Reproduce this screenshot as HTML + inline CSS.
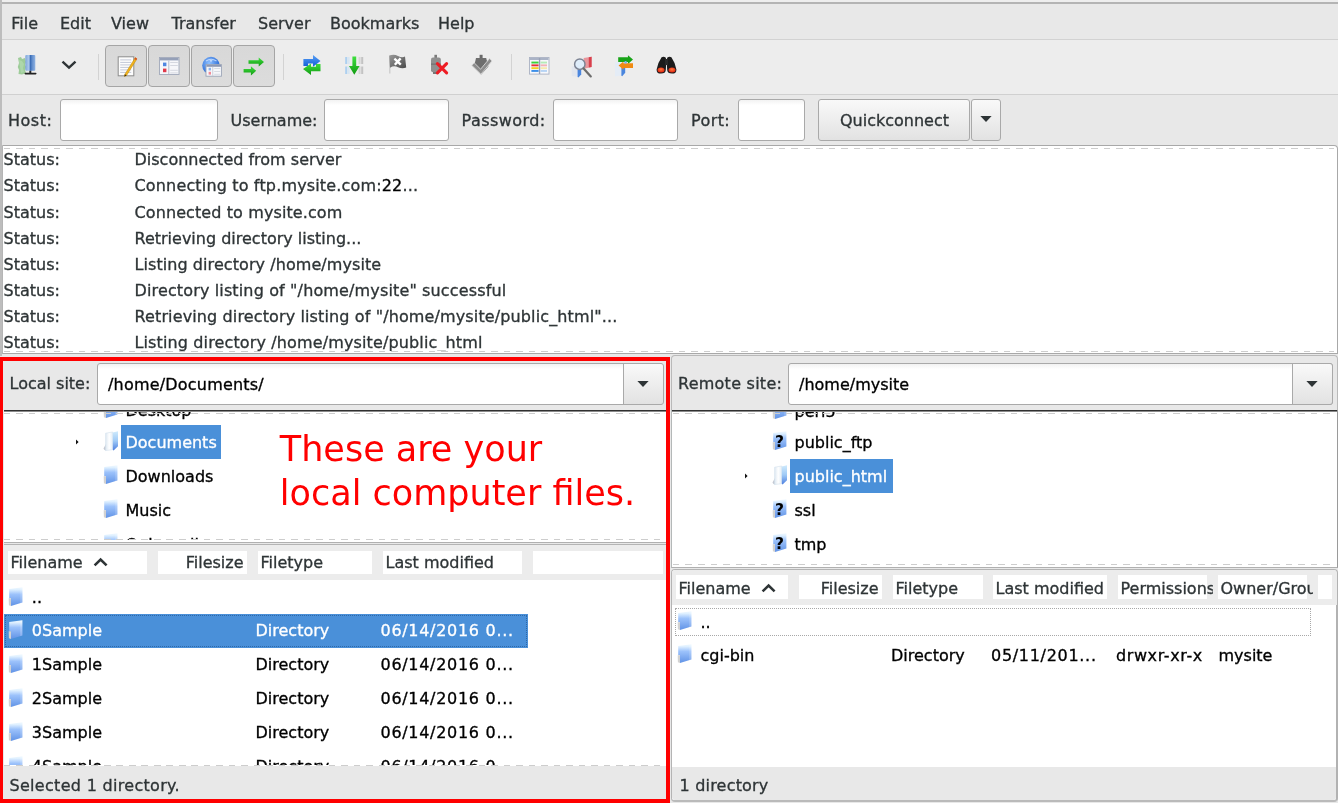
<!DOCTYPE html>
<html><head><meta charset="utf-8"><title>FileZilla</title><style>
html,body{margin:0;padding:0;}
body{width:1338px;height:803px;overflow:hidden;background:#e8e8e8;position:relative;will-change:transform;font-family:"DejaVu Sans", "Liberation Sans", sans-serif;font-size:16px;line-height:20px;color:#2e3436;}
div,span.t,svg{position:absolute;box-sizing:border-box;}
span.t{white-space:pre;-webkit-text-stroke:0.32px currentColor;}
.entry{background:linear-gradient(#f2f2f2,#fff 5px);border:1px solid #a9a9a9;border-radius:3px;}
.btn{background:linear-gradient(#f9f9f9,#e2e2e2);border:1px solid #a9a9a9;border-radius:3px;}
.tog{background:linear-gradient(#d8d8d8,#dcdcdc);border:1px solid #a5a5a5;border-radius:4px;}
.hc{background:#fff;}
.dash{height:1px !important;background:repeating-linear-gradient(90deg,#cdcdcd 0,#cdcdcd 6.5px,transparent 6.5px,transparent 12.5px);}
.sel{background:#4a90d9;}
.clip{overflow:hidden;}
.r{-webkit-text-stroke:0 !important;}</style></head><body>
<svg width="0" height="0" style="left:0;top:0"><defs>
<linearGradient id="gF" x1="0" y1="0" x2="0" y2="1"><stop offset="0" stop-color="#f0f9ff"/><stop offset=".12" stop-color="#dff0ff"/><stop offset=".38" stop-color="#9cc2fb"/><stop offset="1" stop-color="#6193e6"/></linearGradient>
<linearGradient id="gO" x1="0" y1="0" x2="0" y2="1"><stop offset="0" stop-color="#cfeafc"/><stop offset=".5" stop-color="#9fcaf6"/><stop offset="1" stop-color="#4f80e0"/></linearGradient>
<linearGradient id="gP" x1="0" y1="0" x2="1" y2="0"><stop offset="0" stop-color="#dde8f2"/><stop offset=".5" stop-color="#ffffff"/><stop offset="1" stop-color="#e3edf6"/></linearGradient>
<linearGradient id="gSrv" x1="0" y1="0" x2="1" y2="0"><stop offset="0" stop-color="#7fa6da"/><stop offset=".45" stop-color="#b9d2f2"/><stop offset=".55" stop-color="#4f7fc4"/><stop offset="1" stop-color="#8fb2e2"/></linearGradient>
<linearGradient id="gGr" x1="0" y1="0" x2="0" y2="1"><stop offset="0" stop-color="#3fe03f"/><stop offset="1" stop-color="#129a12"/></linearGradient>
<linearGradient id="gBl" x1="0" y1="0" x2="0" y2="1"><stop offset="0" stop-color="#5aa0f5"/><stop offset="1" stop-color="#0f5fd8"/></linearGradient>
<radialGradient id="gGl" cx=".4" cy=".35" r=".7"><stop offset="0" stop-color="#8ec0ff"/><stop offset="1" stop-color="#1c5fd0"/></radialGradient>
<linearGradient id="gGy" x1="0" y1="0" x2="1" y2="1"><stop offset="0" stop-color="#9a9a9a"/><stop offset="1" stop-color="#4a4a4a"/></linearGradient>
<radialGradient id="gLens" cx=".5" cy=".4" r=".6"><stop offset="0" stop-color="#ff7a3a"/><stop offset="1" stop-color="#e02010"/></radialGradient>
</defs></svg>
<div style="left:0px;top:0px;width:1338px;height:2px;background:#eeeeee;"></div>
<div style="left:0px;top:2px;width:1338px;height:2px;background:#b4b4b4;"></div>
<div style="left:0px;top:0px;width:2px;height:356px;background:#bdbdbd;"></div>
<div style="left:2px;top:39px;width:1336px;height:1px;background:#d2d2d2;"></div>
<span class="t" style="left:11.3px;top:13.76px;">File</span>
<span class="t" style="left:60px;top:13.76px;">Edit</span>
<span class="t" style="left:111px;top:13.76px;">View</span>
<span class="t" style="left:171.5px;top:13.76px;">Transfer</span>
<span class="t" style="left:258px;top:13.76px;">Server</span>
<span class="t" style="left:330px;top:13.76px;">Bookmarks</span>
<span class="t" style="left:438px;top:13.76px;">Help</span>
<div style="left:2px;top:40px;width:1336px;height:54px;background:#ededed;"></div>
<div style="left:2px;top:94px;width:1336px;height:1px;background:#d0d0d0;"></div>
<div class="tog" style="left:105.3px;top:45px;width:41.6px;height:42px;"></div>
<div class="tog" style="left:148.0px;top:45px;width:41.6px;height:42px;"></div>
<div class="tog" style="left:190.7px;top:45px;width:41.6px;height:42px;"></div>
<div class="tog" style="left:233.40000000000003px;top:45px;width:41.6px;height:42px;"></div>
<div style="left:97.6px;top:54px;width:1px;height:26px;background:#d3d3d3;"></div>
<div style="left:283px;top:54px;width:1px;height:26px;background:#d3d3d3;"></div>
<div style="left:510.6px;top:54px;width:1px;height:26px;background:#d3d3d3;"></div>
<svg style="left:16.5px;top:54px;" width="22" height="22" viewBox="0 0 22 22"><path d="M1 4 L4 3 L5 5 L8 4 L9 8 L8 11 L9.5 13 L8 16 L9 19 L5 20.5 L1.5 20 L2 16 L0.8 13 L2 9z" fill="#8fc58a" opacity=".85"/><path d="M2 6l3 1 2 3-1 4 1 4-3 1z" fill="#b4dcb0" opacity=".7"/><rect x="8.3" y="1" width="10" height="15.8" rx="1" fill="url(#gSrv)"/><rect x="12.6" y="1" width="1.6" height="15.8" fill="#3d6fb8"/><rect x="12.3" y="16.8" width="2" height="2.4" fill="#2a2a2a"/><rect x="7.5" y="18.8" width="12" height="1.6" rx=".8" fill="#222"/></svg>
<svg style="left:61.3px;top:60px;" width="16" height="10" viewBox="0 0 16 10"><path d="M1.5 1.6 L8 7.6 L14.5 1.6" fill="none" stroke="#2e3436" stroke-width="2.4"/></svg>
<svg style="left:115.5px;top:54.5px;" width="23" height="23" viewBox="0 0 23 23"><rect x="2.2" y="1.8" width="15.6" height="19" fill="#fdfdfd" stroke="#8d8d8d" stroke-width="1"/><rect x="4.2" y="4.4" width="11" height="1" fill="#c3c8d8"/><rect x="4.2" y="6.9" width="11" height="1" fill="#c3c8d8"/><rect x="4.2" y="9.4" width="11" height="1" fill="#c3c8d8"/><rect x="4.2" y="11.9" width="11" height="1" fill="#c3c8d8"/><rect x="4.2" y="14.4" width="11" height="1" fill="#c3c8d8"/><rect x="4.2" y="16.9" width="11" height="1" fill="#c3c8d8"/><path d="M19.3 2.6 L21 3.8 L10.6 20.4 L8.4 21.4 L8.9 19.2z" fill="#f2b31c" stroke="#b8860b" stroke-width=".5"/><path d="M19.3 2.6L21 3.8 20.2 5.2 18.5 4z" fill="#d9482b"/><path d="M8.4 21.4l.5-2.2 1.7 1.2z" fill="#3a2a10"/></svg>
<svg style="left:158.8px;top:57px;" width="21" height="19" viewBox="0 0 21 19"><rect x=".5" y=".5" width="19.5" height="17" fill="#f6f7fa" stroke="#a0a8ba" stroke-width=".9"/><rect x="1" y="1" width="18.5" height="2.4" fill="#95a0b8"/><rect x="9.3" y="3.6" width="1" height="13.5" fill="#b6bccb"/><rect x="4" y="5.6" width="3.4" height="3.6" fill="#4f86e0"/><rect x="4" y="11.6" width="3.4" height="3.6" fill="#e0394a"/><rect x="11.2" y="5" width="7.6" height="1" fill="#d5d8e0"/><rect x="11.2" y="8" width="7.6" height="1" fill="#d5d8e0"/><rect x="11.2" y="12.8" width="7.6" height="1" fill="#d5d8e0"/><rect x="11.2" y="15.4" width="7.6" height="1" fill="#d5d8e0"/></svg>
<svg style="left:202.3px;top:55.5px;" width="21" height="21" viewBox="0 0 21 21"><circle cx="9" cy="9.6" r="8.8" fill="url(#gGl)"/><path d="M4 5 Q9 1.5 14.5 5" fill="none" stroke="#cfe4ff" stroke-width="1.2" opacity=".8"/><path d="M7.4 4h3.2l-1.6 2.6z" fill="#cfe4ff" opacity=".8"/><rect x="4" y="8.6" width="15.4" height="11.6" fill="#f6f7fa" stroke="#9aa3b6" stroke-width=".9"/><rect x="4.4" y="9" width="14.6" height="1.8" fill="#8d98b3"/><rect x="10.4" y="10.8" width=".8" height="9" fill="#c0c5d2"/><rect x="6.6" y="11.8" width="2.4" height="2.6" fill="#8db3ee"/><rect x="6.6" y="15.8" width="2.4" height="2.8" fill="#f08a96"/><rect x="12.2" y="12" width="6" height=".9" fill="#d5d8e0"/><rect x="12.2" y="15" width="6" height=".9" fill="#d5d8e0"/><rect x="12.2" y="17.8" width="6" height=".9" fill="#d5d8e0"/></svg>
<svg style="left:243.2px;top:56px;" width="22" height="20" viewBox="0 0 22 20"><path d="M5.5 4.3 L15.71 4.3 L15.71 1.4000000000000004 L21.0 6 L15.71 10.6 L15.71 7.7 L5.5 7.7z" fill="url(#gGr)"/><path d="M0.6 13.100000000000001 L7.91 13.100000000000001 L7.91 10.200000000000001 L13.2 14.8 L7.91 19.4 L7.91 16.5 L0.6 16.5z" fill="url(#gGr)"/></svg>
<svg style="left:302px;top:54px;" width="20" height="22" viewBox="0 0 20 22"><path d="M1.4 12 V5 H11 V1 L18.5 7 L11 12.8 V9.5 H6 V12z" fill="url(#gBl)"/><path d="M18.5 10 V17.2 H9 V21 L1 15 L9 9.4 V12.7 H14 V10z" fill="url(#gGr)"/></svg>
<svg style="left:343.4px;top:56px;" width="22" height="20" viewBox="0 0 22 20"><rect x="2.2" y="1" width="2" height="7" fill="#9cc8f0" opacity=".8"/><rect x="2.2" y="10.5" width="2" height="7.5" fill="#9cc8f0" opacity=".8"/><rect x="4.6" y="1" width="2" height="7" fill="#cfe3f5" opacity=".8"/><rect x="4.6" y="10.5" width="2" height="7.5" fill="#cfe3f5" opacity=".8"/><rect x="15.6" y="1" width="2" height="7" fill="#d0d0d0" opacity=".8"/><rect x="15.6" y="10.5" width="2" height="7.5" fill="#d0d0d0" opacity=".8"/><rect x="18.2" y="1" width="2" height="7" fill="#b8b8b8" opacity=".8"/><rect x="18.2" y="10.5" width="2" height="7.5" fill="#b8b8b8" opacity=".8"/><path d="M9.4 0.6 H13.2 V10 H16.6 L11.3 18.8 L6 10 H9.4z" fill="url(#gGr)"/></svg>
<svg style="left:388px;top:54px;" width="20" height="22" viewBox="0 0 20 22"><rect x="1.2" y="2" width="1.2" height="17.5" fill="#c9c9c9"/><path d="M1.2 1.6 Q6 -0.4 10 2 T17 2.6 L18.2 13.6 Q14 15.2 10 13.2 T2 13.8z" fill="url(#gGy)"/><path d="M6.4 4.6 L12.8 10.6 M12.6 4.4 L6.8 10.8" stroke="#fff" stroke-width="2.4" fill="none"/></svg>
<svg style="left:430px;top:54.2px;" width="20" height="22" viewBox="0 0 20 22"><rect x="4.4" y="0.8" width="2.6" height="3.5" fill="#7a7a7a"/><rect x="1" y="3.6" width="9.8" height="14.6" rx="2" fill="#8f8f8f"/><rect x="1" y="9.6" width="9.8" height="1" fill="#6c6c6c"/><rect x="3" y="18" width="5.6" height="2" fill="#777"/><path d="M7.4 9.6 L16.6 18.8 M16.6 9.6 L7.4 18.8" stroke="#ee1c24" stroke-width="3.1" stroke-linecap="round" fill="none"/></svg>
<svg style="left:471px;top:54px;" width="22" height="22" viewBox="0 0 22 22"><rect x="8.6" y="0.8" width="3" height="3.6" fill="#6a6a6a"/><path d="M5 4 L15.2 4 L17.4 12.6 L10.2 20.6 L3 12.8z" fill="#6e6e6e"/><path d="M0.8 11.4 L3.2 8.8 L9.6 15.2 L18.6 4.4 L21 7 L9.9 20.2z" fill="#8c8c8c" stroke="#d8d8d8" stroke-width=".9"/></svg>
<svg style="left:528.8px;top:57px;" width="21" height="18" viewBox="0 0 21 18"><rect x=".5" y=".5" width="19.5" height="16.6" fill="#f7f8fb" stroke="#a9b1c3" stroke-width=".9"/><rect x="1" y="1" width="18.5" height="2" fill="#aab3c6"/><rect x="2.4" y="4.6" width="7.2" height="1.9" fill="#39d339"/><rect x="11.6" y="4.6" width="6.4" height="1.9" fill="#39d339" opacity=".35"/><rect x="2.4" y="7.3999999999999995" width="7.2" height="1.9" fill="#e8323c"/><rect x="11.6" y="7.3999999999999995" width="6.4" height="1.9" fill="#e8323c" opacity=".35"/><rect x="2.4" y="10.2" width="7.2" height="1.9" fill="#f2d21f"/><rect x="11.6" y="10.2" width="6.4" height="1.9" fill="#f2d21f" opacity=".35"/><rect x="2.4" y="12.999999999999998" width="7.2" height="1.9" fill="#3d8fe8"/><rect x="11.6" y="12.999999999999998" width="6.4" height="1.9" fill="#3d8fe8" opacity=".35"/><rect x="9.9" y="1" width="1.3" height="16" fill="#97a1b6"/></svg>
<svg style="left:571px;top:55.8px;" width="22" height="23" viewBox="0 0 22 23"><path d="M12.6 2 L20.6 0.8 L20.6 11 L14 12.6z" fill="#e8969c"/><path d="M17.8 1.2L20.6 .8V11l-2.8 .6z" fill="#d8404c"/><path d="M0.8 10.6 L8 9.6 L8 21 L0.8 20z" fill="#e2e6ee"/><path d="M6.6 14 L10.2 13.4 L10.2 18.6 L7.4 21.6 L6.6 21z" fill="#4a86de"/><circle cx="8.8" cy="8.2" r="5.2" fill="#dcecfb" fill-opacity=".85" stroke="#7d8494" stroke-width="1.5"/><path d="M12.6 12.4 L19.8 20.4" stroke="#6d6d6d" stroke-width="2.2" stroke-linecap="round"/></svg>
<svg style="left:614px;top:55px;" width="20" height="22" viewBox="0 0 20 22"><path d="M1 7.6 L7.4 6.6 L7.4 20.6 L1 21.4z" fill="#e4ecf6"/><path d="M7.4 12.6 L11.2 11.8 L11.2 17.8 L8.2 21.2 L7.4 20.8z" fill="#4a86de"/><path d="M4.2 2.3 L13.940000000000001 2.3 L13.940000000000001 0.1999999999999993 L19.0 4.6 L13.940000000000001 9.0 L13.940000000000001 6.8999999999999995 L4.2 6.8999999999999995z" fill="#18a418"/><path d="M19.0 8.3 L9.43 8.3 L9.43 6.3999999999999995 L4.6 10.6 L9.43 14.8 L9.43 12.899999999999999 L19.0 12.899999999999999z" fill="#f08a12"/><circle cx="11.6" cy="7.4" r="1.3" fill="#7fb2ee"/></svg>
<svg style="left:656px;top:56px;" width="21" height="19" viewBox="0 0 21 19"><path d="M5.6 1.2 Q7.6 0 9.6 1.4 L10.4 4 L9.8 14 Q9.6 17.6 5 17.6 Q0.4 17.6 0.6 13.4 Q1.6 7 5.6 1.2z" fill="#1c1c1c"/><path d="M15.4 1.2 Q13.4 0 11.4 1.4 L10.6 4 L11.2 14 Q11.4 17.6 16 17.6 Q20.6 17.6 20.4 13.4 Q19.4 7 15.4 1.2z" fill="#1c1c1c"/><rect x="9" y="3" width="3" height="6" fill="#2a2a2a"/><ellipse cx="5" cy="14" rx="3.5" ry="2.5" fill="url(#gLens)"/><ellipse cx="16" cy="14" rx="3.5" ry="2.5" fill="url(#gLens)"/></svg>
<span class="t" style="left:8px;top:111.26px;letter-spacing:0.5px;">Host:</span>
<div class="entry" style="left:60px;top:99px;width:157.5px;height:41.5px;"></div>
<span class="t" style="left:230.5px;top:111.26px;">Username:</span>
<div class="entry" style="left:324px;top:99px;width:124.5px;height:41.5px;"></div>
<span class="t" style="left:461.5px;top:111.26px;letter-spacing:0.45px;">Password:</span>
<div class="entry" style="left:553px;top:99px;width:124.5px;height:41.5px;"></div>
<span class="t" style="left:691px;top:111.26px;letter-spacing:0.4px;">Port:</span>
<div class="entry" style="left:738px;top:99px;width:67px;height:41.5px;"></div>
<div class="btn" style="left:818px;top:99px;width:152px;height:41.5px;"></div>
<span class="t" style="left:840px;top:111.26px;">Quickconnect</span>
<div class="btn" style="left:971.4px;top:99px;width:29.6px;height:41.5px;"></div>
<svg style="left:979.2px;top:115.4px;" width="14" height="8" viewBox="0 0 14 8"><path d="M1.4 .9h11.2l-5.6 6z" fill="#2e3436"/></svg>
<div style="left:2px;top:145px;width:1336px;height:208.5px;background:#fff;border:1px solid #a8a8a8;border-radius:0 4px 0 0;border-left-color:#b5b5b5"></div>
<div class="dash" style="left:4px;top:148px;width:1330px;height:0px;"></div>
<div class="dash" style="left:4px;top:351px;width:1330px;height:0px;"></div>
<div class="clip" style="left:3px;top:146px;width:1333px;height:205px">
<span class="t" style="left:0.5px;top:4.26px;">Status:</span>
<span class="t" style="left:131.5px;top:4.26px;">Disconnected from server</span>
<span class="t" style="left:0.5px;top:30.41px;">Status:</span>
<span class="t" style="left:131.5px;top:30.41px;letter-spacing:0.16px;">Connecting to ftp.mysite.com:<span style="color:#000">22</span>...</span>
<span class="t" style="left:0.5px;top:56.56px;">Status:</span>
<span class="t" style="left:131.5px;top:56.56px;letter-spacing:0.1px;">Connected to mysite.com</span>
<span class="t" style="left:0.5px;top:82.71px;">Status:</span>
<span class="t" style="left:131.5px;top:82.71px;">Retrieving directory listing...</span>
<span class="t" style="left:0.5px;top:108.86px;">Status:</span>
<span class="t" style="left:131.5px;top:108.86px;letter-spacing:0.07px;">Listing directory /home/mysite</span>
<span class="t" style="left:0.5px;top:135.01px;">Status:</span>
<span class="t" style="left:131.5px;top:135.01px;letter-spacing:0.14px;">Directory listing of "/home/mysite" successful</span>
<span class="t" style="left:0.5px;top:161.16px;">Status:</span>
<span class="t" style="left:131.5px;top:161.16px;letter-spacing:0.125px;">Retrieving directory listing of "/home/mysite/public_html"...</span>
<span class="t" style="left:0.5px;top:187.31px;">Status:</span>
<span class="t" style="left:131.5px;top:187.31px;letter-spacing:0.13px;">Listing directory /home/mysite/public_html</span>
</div>
<span class="t" style="left:9.5px;top:374.26px;">Local site:</span>
<div class="entry" style="left:96.8px;top:363px;width:566.7px;height:41.5px;"></div>
<div class="btn" style="left:622.5px;top:363px;width:41px;height:41.5px;border-radius:0 3px 3px 0;"></div>
<svg style="left:636px;top:380px;" width="14" height="8" viewBox="0 0 14 8"><path d="M1.4 .9h11.2l-5.6 6z" fill="#2e3436"/></svg>
<span class="t" style="left:108px;top:375.26px;color:#000;letter-spacing:0.2px;">/home/Documents/</span>
<div style="left:4px;top:410px;width:662px;height:133px;background:linear-gradient(#303030 0,#303030 1px,#8a8a8a 1px,#8a8a8a 2px,#fff 2px);border-bottom:1px solid #b0b0b0;"></div>
<div class="clip" style="left:4px;top:412px;width:662px;height:128px">
<svg style="left:99px;top:-13.0px;" width="16" height="20" viewBox="0 0 16 20"><path d="M1.2 2.1 L14.4 0.2 L14.4 15.6 L3 19 L3 11.2 L1.2 11.2z" fill="url(#gF)"/><path d="M12.2 .5L14.4 .2V15.6L12.2 16.3z" fill="#fff" opacity=".18"/><path d="M0.7 11.2 L3 11.2 L3 19 L0.9 18.3z" fill="#d2d2d2"/></svg>
<span class="t" style="left:121.5px;top:-10.54px;color:#000;">Desktop</span>
<div class="sel" style="left:117.2px;top:12.600000000000023px;width:100px;height:34px;"></div>
<svg style="left:71.2px;top:25.5px;" width="6" height="8" viewBox="0 0 6 8"><path d="M1 1.6 L3.6 4 L1 6.4z" fill="#111"/></svg>
<svg style="left:99px;top:18.5px;" width="17" height="21" viewBox="0 0 17 21"><path d="M0.5 17.5 L3 13 L3 19.5 L1.5 19z" fill="#8a93a8" opacity=".5"/><path d="M2.6 2.2 L9.8 1 L9.8 18.6 L2.6 19.6z" fill="url(#gP)" stroke="#d4e0ec" stroke-width=".6"/><path d="M9.8 1.4 L15 0.3 L15 15.2 L10.6 19.4 L9.8 18.8z" fill="url(#gO)"/></svg>
<span class="t" style="left:121.5px;top:20.96px;color:#fff;">Documents</span>
<svg style="left:99px;top:52.5px;" width="16" height="20" viewBox="0 0 16 20"><path d="M1.2 2.1 L14.4 0.2 L14.4 15.6 L3 19 L3 11.2 L1.2 11.2z" fill="url(#gF)"/><path d="M12.2 .5L14.4 .2V15.6L12.2 16.3z" fill="#fff" opacity=".18"/><path d="M0.7 11.2 L3 11.2 L3 19 L0.9 18.3z" fill="#d2d2d2"/></svg>
<span class="t" style="left:121.5px;top:54.96px;color:#000;">Downloads</span>
<svg style="left:99px;top:86.5px;" width="16" height="20" viewBox="0 0 16 20"><path d="M1.2 2.1 L14.4 0.2 L14.4 15.6 L3 19 L3 11.2 L1.2 11.2z" fill="url(#gF)"/><path d="M12.2 .5L14.4 .2V15.6L12.2 16.3z" fill="#fff" opacity=".18"/><path d="M0.7 11.2 L3 11.2 L3 19 L0.9 18.3z" fill="#d2d2d2"/></svg>
<span class="t" style="left:121.5px;top:88.96px;color:#000;">Music</span>
<svg style="left:99px;top:120.5px;" width="16" height="20" viewBox="0 0 16 20"><path d="M1.2 2.1 L14.4 0.2 L14.4 15.6 L3 19 L3 11.2 L1.2 11.2z" fill="url(#gF)"/><path d="M12.2 .5L14.4 .2V15.6L12.2 16.3z" fill="#fff" opacity=".18"/><path d="M0.7 11.2 L3 11.2 L3 19 L0.9 18.3z" fill="#d2d2d2"/></svg>
<span class="t" style="left:121.5px;top:122.96px;color:#000;">Onboarding</span>
</div>
<div class="dash" style="left:4px;top:412.5px;width:662px;height:0px;"></div>
<div class="dash" style="left:4px;top:539px;width:662px;height:0px;"></div>
<div style="left:4px;top:544px;width:662px;height:1px;background:#b4b4b4;"></div>
<div style="left:4px;top:545px;width:662px;height:35px;background:#ececec;"></div>
<div class="hc" style="left:8px;top:550.5px;width:139px;height:23.5px;"></div>
<div class="clip" style="left:8px;top:547.5px;width:142px;height:29.5px"><span class="t" style="left:2.5px;top:5.76px">Filename</span></div>
<svg style="left:93px;top:556.5px;" width="16" height="10" viewBox="0 0 16 10"><path d="M1.6 8.4 L7.6 2.6 L13.6 8.4" fill="none" stroke="#2e3436" stroke-width="2.6"/></svg>
<div class="hc" style="left:158px;top:550.5px;width:89px;height:23.5px;"></div>
<div class="clip" style="left:156px;top:547.5px;width:87.5px;height:29.5px"><span class="t" style="right:0;top:5.76px">Filesize</span></div>
<div class="hc" style="left:258px;top:550.5px;width:113.5px;height:23.5px;"></div>
<div class="clip" style="left:258px;top:547.5px;width:116.5px;height:29.5px"><span class="t" style="left:2.5px;top:5.76px">Filetype</span></div>
<div class="hc" style="left:383px;top:550.5px;width:139px;height:23.5px;"></div>
<div class="clip" style="left:383px;top:547.5px;width:142px;height:29.5px"><span class="t" style="left:2.5px;top:5.76px">Last modified</span></div>
<div class="hc" style="left:533px;top:550.5px;width:129.70000000000005px;height:23.5px;"></div>
<div style="left:4px;top:580px;width:662px;height:186px;background:#fff;"></div>
<div class="clip" style="left:4px;top:580px;width:662px;height:185px">
<svg style="left:4px;top:6.5px;" width="16" height="20" viewBox="0 0 16 20"><path d="M1.2 2.1 L14.4 0.2 L14.4 15.6 L3 19 L3 11.2 L1.2 11.2z" fill="url(#gF)"/><path d="M12.2 .5L14.4 .2V15.6L12.2 16.3z" fill="#fff" opacity=".18"/><path d="M0.7 11.2 L3 11.2 L3 19 L0.9 18.3z" fill="#d2d2d2"/></svg>
<span class="t" style="left:27.8px;top:8.26px;color:#000;">..</span>
<div style="left:0px;top:34px;width:524px;height:34px;background:#4a90d9;outline:1px dotted #2f69a8;outline-offset:-2px;"></div>
<svg style="left:4px;top:39.5px;" width="16" height="20" viewBox="0 0 16 20"><path d="M1.2 2.1 L14.4 0.2 L14.4 15.6 L3 19 L3 11.2 L1.2 11.2z" fill="url(#gF)"/><path d="M12.2 .5L14.4 .2V15.6L12.2 16.3z" fill="#fff" opacity=".18"/><path d="M0.7 11.2 L3 11.2 L3 19 L0.9 18.3z" fill="#d2d2d2"/></svg>
<span class="t" style="left:27.8px;top:41.26px;color:#fff;">0Sample</span>
<span class="t" style="left:251.5px;top:41.26px;color:#fff;">Directory</span>
<span class="t" style="left:376.5px;top:41.26px;color:#fff;letter-spacing:0.7px;">06/14/2016 0...</span>
<svg style="left:4px;top:73.5px;" width="16" height="20" viewBox="0 0 16 20"><path d="M1.2 2.1 L14.4 0.2 L14.4 15.6 L3 19 L3 11.2 L1.2 11.2z" fill="url(#gF)"/><path d="M12.2 .5L14.4 .2V15.6L12.2 16.3z" fill="#fff" opacity=".18"/><path d="M0.7 11.2 L3 11.2 L3 19 L0.9 18.3z" fill="#d2d2d2"/></svg>
<span class="t" style="left:27.8px;top:75.26px;color:#000;">1Sample</span>
<span class="t" style="left:251.5px;top:75.26px;color:#000;">Directory</span>
<span class="t" style="left:376.5px;top:75.26px;color:#000;letter-spacing:0.7px;">06/14/2016 0...</span>
<svg style="left:4px;top:107.5px;" width="16" height="20" viewBox="0 0 16 20"><path d="M1.2 2.1 L14.4 0.2 L14.4 15.6 L3 19 L3 11.2 L1.2 11.2z" fill="url(#gF)"/><path d="M12.2 .5L14.4 .2V15.6L12.2 16.3z" fill="#fff" opacity=".18"/><path d="M0.7 11.2 L3 11.2 L3 19 L0.9 18.3z" fill="#d2d2d2"/></svg>
<span class="t" style="left:27.8px;top:109.26px;color:#000;">2Sample</span>
<span class="t" style="left:251.5px;top:109.26px;color:#000;">Directory</span>
<span class="t" style="left:376.5px;top:109.26px;color:#000;letter-spacing:0.7px;">06/14/2016 0...</span>
<svg style="left:4px;top:141.5px;" width="16" height="20" viewBox="0 0 16 20"><path d="M1.2 2.1 L14.4 0.2 L14.4 15.6 L3 19 L3 11.2 L1.2 11.2z" fill="url(#gF)"/><path d="M12.2 .5L14.4 .2V15.6L12.2 16.3z" fill="#fff" opacity=".18"/><path d="M0.7 11.2 L3 11.2 L3 19 L0.9 18.3z" fill="#d2d2d2"/></svg>
<span class="t" style="left:27.8px;top:143.26px;color:#000;">3Sample</span>
<span class="t" style="left:251.5px;top:143.26px;color:#000;">Directory</span>
<span class="t" style="left:376.5px;top:143.26px;color:#000;letter-spacing:0.7px;">06/14/2016 0...</span>
<svg style="left:4px;top:175.5px;" width="16" height="20" viewBox="0 0 16 20"><path d="M1.2 2.1 L14.4 0.2 L14.4 15.6 L3 19 L3 11.2 L1.2 11.2z" fill="url(#gF)"/><path d="M12.2 .5L14.4 .2V15.6L12.2 16.3z" fill="#fff" opacity=".18"/><path d="M0.7 11.2 L3 11.2 L3 19 L0.9 18.3z" fill="#d2d2d2"/></svg>
<span class="t" style="left:27.8px;top:177.26px;color:#000;">4Sample</span>
<span class="t" style="left:251.5px;top:177.26px;color:#000;">Directory</span>
<span class="t" style="left:376.5px;top:177.26px;color:#000;letter-spacing:0.7px;">06/14/2016 0...</span>
</div>
<div class="dash" style="left:4px;top:765px;width:662px;height:0px;"></div>
<div style="left:4px;top:766px;width:662px;height:33px;background:#e8e8e8;"></div>
<span class="t" style="left:9.5px;top:776.26px;letter-spacing:0.3px;">Selected 1 directory.</span>
<div style="left:671px;top:355px;width:667px;height:55.5px;background:#e8e8e8;border:1px solid #b9b9b9;border-bottom:none;border-radius:4px 4px 0 0;"></div>
<span class="t" style="left:678px;top:373.76px;letter-spacing:0.25px;">Remote site:</span>
<div class="entry" style="left:788px;top:363px;width:545px;height:41.5px;"></div>
<div class="btn" style="left:1291.5px;top:363px;width:41.5px;height:41.5px;border-radius:0 3px 3px 0;"></div>
<svg style="left:1305px;top:380px;" width="14" height="8" viewBox="0 0 14 8"><path d="M1.4 .9h11.2l-5.6 6z" fill="#2e3436"/></svg>
<span class="t" style="left:799px;top:375.26px;color:#000;">/home/mysite</span>
<div style="left:671px;top:410px;width:667px;height:158px;background:linear-gradient(#303030 0,#303030 1px,#8a8a8a 1px,#8a8a8a 2px,#fff 2px);border-bottom:1px solid #b0b0b0;border-left:1px solid #b4b8b8;border-right:1px solid #9a9a9a;"></div>
<div class="clip" style="left:672px;top:412px;width:665px;height:153px">
<svg style="left:100px;top:-12.5px;" width="16" height="20" viewBox="0 0 16 20"><path d="M1.2 2.1 L14.4 0.2 L14.4 15.6 L3 19 L3 11.2 L1.2 11.2z" fill="url(#gF)"/><path d="M12.2 .5L14.4 .2V15.6L12.2 16.3z" fill="#fff" opacity=".18"/><path d="M0.7 11.2 L3 11.2 L3 19 L0.9 18.3z" fill="#d2d2d2"/></svg>
<span class="t" style="left:122.5px;top:-10.04px;color:#000;">perl5</span>
<svg style="left:100px;top:19.0px;" width="16" height="20" viewBox="0 0 16 20"><path d="M1.2 2.1 L14.4 0.2 L14.4 15.6 L3 19 L3 11.2 L1.2 11.2z" fill="url(#gF)"/><path d="M0.7 11.2 L3 11.2 L3 19 L0.9 18.3z" fill="#d2d2d2"/><text x="7.4" y="15.6" text-anchor="middle" font-family="DejaVu Sans, Liberation Sans, sans-serif" font-weight="bold" font-size="15.5" fill="#000">?</text></svg>
<span class="t" style="left:122.5px;top:21.46px;color:#000;">public_ftp</span>
<div class="sel" style="left:118.20000000000005px;top:47.10000000000002px;width:102.5px;height:34px;"></div>
<svg style="left:72.20000000000005px;top:60.0px;" width="6" height="8" viewBox="0 0 6 8"><path d="M1 1.6 L3.6 4 L1 6.4z" fill="#111"/></svg>
<svg style="left:100px;top:53.0px;" width="17" height="21" viewBox="0 0 17 21"><path d="M0.5 17.5 L3 13 L3 19.5 L1.5 19z" fill="#8a93a8" opacity=".5"/><path d="M2.6 2.2 L9.8 1 L9.8 18.6 L2.6 19.6z" fill="url(#gP)" stroke="#d4e0ec" stroke-width=".6"/><path d="M9.8 1.4 L15 0.3 L15 15.2 L10.6 19.4 L9.8 18.8z" fill="url(#gO)"/></svg>
<span class="t" style="left:122.5px;top:55.46px;color:#fff;">public_html</span>
<svg style="left:100px;top:87.0px;" width="16" height="20" viewBox="0 0 16 20"><path d="M1.2 2.1 L14.4 0.2 L14.4 15.6 L3 19 L3 11.2 L1.2 11.2z" fill="url(#gF)"/><path d="M0.7 11.2 L3 11.2 L3 19 L0.9 18.3z" fill="#d2d2d2"/><text x="7.4" y="15.6" text-anchor="middle" font-family="DejaVu Sans, Liberation Sans, sans-serif" font-weight="bold" font-size="15.5" fill="#000">?</text></svg>
<span class="t" style="left:122.5px;top:89.46px;color:#000;">ssl</span>
<svg style="left:100px;top:121.0px;" width="16" height="20" viewBox="0 0 16 20"><path d="M1.2 2.1 L14.4 0.2 L14.4 15.6 L3 19 L3 11.2 L1.2 11.2z" fill="url(#gF)"/><path d="M0.7 11.2 L3 11.2 L3 19 L0.9 18.3z" fill="#d2d2d2"/><text x="7.4" y="15.6" text-anchor="middle" font-family="DejaVu Sans, Liberation Sans, sans-serif" font-weight="bold" font-size="15.5" fill="#000">?</text></svg>
<span class="t" style="left:122.5px;top:123.46px;color:#000;">tmp</span>
</div>
<div class="dash" style="left:673px;top:413px;width:663px;height:0px;"></div>
<div class="dash" style="left:673px;top:564px;width:663px;height:0px;"></div>
<div style="left:671px;top:569px;width:667px;height:233px;background:#fff;border:1px solid #b4b4b4;border-right:2px solid #b2b2b2;border-bottom:2px solid #bababa;border-radius:4px 4px 4px 4px;"></div>
<div style="left:672px;top:570px;width:665px;height:35px;background:#ececec;border-radius:3px 3px 0 0;"></div>
<div class="hc" style="left:676px;top:575px;width:112px;height:24px;"></div>
<div class="clip" style="left:676px;top:572px;width:115px;height:30px"><span class="t" style="left:2.5px;top:7.26px">Filename</span></div>
<svg style="left:761px;top:582.5px;" width="16" height="10" viewBox="0 0 16 10"><path d="M1.6 8.4 L7.6 2.6 L13.6 8.4" fill="none" stroke="#2e3436" stroke-width="2.6"/></svg>
<div class="hc" style="left:799px;top:575px;width:83px;height:24px;"></div>
<div class="clip" style="left:797px;top:572px;width:81.5px;height:30px"><span class="t" style="right:0;top:7.26px">Filesize</span></div>
<div class="hc" style="left:893px;top:575px;width:89.5px;height:24px;"></div>
<div class="clip" style="left:893px;top:572px;width:92.5px;height:30px"><span class="t" style="left:2.5px;top:7.26px">Filetype</span></div>
<div class="hc" style="left:993px;top:575px;width:114px;height:24px;"></div>
<div class="clip" style="left:993px;top:572px;width:117px;height:30px"><span class="t" style="left:2.5px;top:7.26px">Last modified</span></div>
<div class="hc" style="left:1118px;top:575px;width:89px;height:24px;"></div>
<div class="clip" style="left:1118px;top:572px;width:95px;height:30px"><span class="t" style="left:2.5px;top:7.26px">Permissions</span></div>
<div class="hc" style="left:1218px;top:575px;width:89px;height:24px;"></div>
<div class="clip" style="left:1218px;top:572px;width:95px;height:30px"><span class="t" style="left:2.5px;top:7.26px">Owner/Group</span></div>
<div class="hc" style="left:1318px;top:575px;width:14px;height:24px;"></div>
<div style="left:674.5px;top:608.3px;width:636px;height:28.2px;border:1px dotted #a8a8a8;"></div>
<svg style="left:676.5px;top:610.6px;" width="16" height="20" viewBox="0 0 16 20"><path d="M1.2 2.1 L14.4 0.2 L14.4 15.6 L3 19 L3 11.2 L1.2 11.2z" fill="url(#gF)"/><path d="M12.2 .5L14.4 .2V15.6L12.2 16.3z" fill="#fff" opacity=".18"/><path d="M0.7 11.2 L3 11.2 L3 19 L0.9 18.3z" fill="#d2d2d2"/></svg>
<span class="t" style="left:700.5px;top:612.86px;color:#000;">..</span>
<svg style="left:676.5px;top:644px;" width="16" height="20" viewBox="0 0 16 20"><path d="M1.2 2.1 L14.4 0.2 L14.4 15.6 L3 19 L3 11.2 L1.2 11.2z" fill="url(#gF)"/><path d="M12.2 .5L14.4 .2V15.6L12.2 16.3z" fill="#fff" opacity=".18"/><path d="M0.7 11.2 L3 11.2 L3 19 L0.9 18.3z" fill="#d2d2d2"/></svg>
<span class="t" style="left:700.5px;top:646.26px;color:#000;">cgi-bin</span>
<span class="t" style="left:891px;top:646.26px;color:#000;">Directory</span>
<span class="t" style="left:991px;top:646.26px;color:#000;letter-spacing:0.7px;">05/11/201...</span>
<span class="t" style="left:1116px;top:646.26px;color:#000;letter-spacing:0.6px;">drwxr-xr-x</span>
<span class="t" style="left:1218.5px;top:646.26px;color:#000;">mysite</span>
<div style="left:672px;top:766.6px;width:664px;height:33.4px;background:#e8e8e8;border-radius:0 0 3px 3px;"></div>
<span class="t" style="left:679.5px;top:776.46px;letter-spacing:0.2px;">1 directory</span>
<div style="left:0px;top:357px;width:670px;height:446px;border:4px solid #ff0000;border-left-width:3.7px;"></div>
<span class="t r" style="left:279.8px;top:427.49px;color:#ff0000;font-size:35px;line-height:44px;">These are your</span>
<span class="t r" style="left:279.8px;top:471.49px;color:#ff0000;font-size:35px;line-height:44px;">local computer files.</span>
</body></html>
